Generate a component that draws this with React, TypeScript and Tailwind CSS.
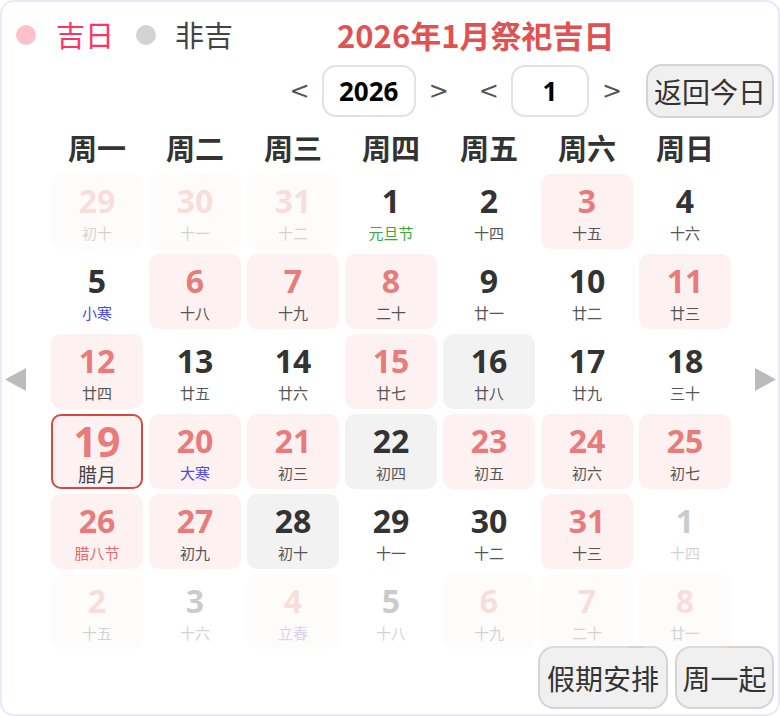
import React from "react";

type Kind = "lucky" | "plain" | "gray" | "today";

interface Cell {
  day: number;
  lunar: string;
  kind: Kind;
  out?: boolean;
  tone?: "green" | "blue" | "red" | "purple";
}

const WEEK = ["周一", "周二", "周三", "周四", "周五", "周六", "周日"];

const CELLS: Cell[] = [
  { day: 29, lunar: "初十", kind: "lucky", out: true },
  { day: 30, lunar: "十一", kind: "lucky", out: true },
  { day: 31, lunar: "十二", kind: "lucky", out: true },
  { day: 1, lunar: "元旦节", kind: "plain", tone: "green" },
  { day: 2, lunar: "十四", kind: "plain" },
  { day: 3, lunar: "十五", kind: "lucky" },
  { day: 4, lunar: "十六", kind: "plain" },

  { day: 5, lunar: "小寒", kind: "plain", tone: "blue" },
  { day: 6, lunar: "十八", kind: "lucky" },
  { day: 7, lunar: "十九", kind: "lucky" },
  { day: 8, lunar: "二十", kind: "lucky" },
  { day: 9, lunar: "廿一", kind: "plain" },
  { day: 10, lunar: "廿二", kind: "plain" },
  { day: 11, lunar: "廿三", kind: "lucky" },

  { day: 12, lunar: "廿四", kind: "lucky" },
  { day: 13, lunar: "廿五", kind: "plain" },
  { day: 14, lunar: "廿六", kind: "plain" },
  { day: 15, lunar: "廿七", kind: "lucky" },
  { day: 16, lunar: "廿八", kind: "gray" },
  { day: 17, lunar: "廿九", kind: "plain" },
  { day: 18, lunar: "三十", kind: "plain" },

  { day: 19, lunar: "腊月", kind: "today" },
  { day: 20, lunar: "大寒", kind: "lucky", tone: "blue" },
  { day: 21, lunar: "初三", kind: "lucky" },
  { day: 22, lunar: "初四", kind: "gray" },
  { day: 23, lunar: "初五", kind: "lucky" },
  { day: 24, lunar: "初六", kind: "lucky" },
  { day: 25, lunar: "初七", kind: "lucky" },

  { day: 26, lunar: "腊八节", kind: "lucky", tone: "red" },
  { day: 27, lunar: "初九", kind: "lucky" },
  { day: 28, lunar: "初十", kind: "gray" },
  { day: 29, lunar: "十一", kind: "plain" },
  { day: 30, lunar: "十二", kind: "plain" },
  { day: 31, lunar: "十三", kind: "lucky" },
  { day: 1, lunar: "十四", kind: "plain", out: true },

  { day: 2, lunar: "十五", kind: "lucky", out: true },
  { day: 3, lunar: "十六", kind: "plain", out: true },
  { day: 4, lunar: "立春", kind: "lucky", out: true, tone: "purple" },
  { day: 5, lunar: "十八", kind: "plain", out: true },
  { day: 6, lunar: "十九", kind: "lucky", out: true },
  { day: 7, lunar: "二十", kind: "lucky", out: true },
  { day: 8, lunar: "廿一", kind: "lucky", out: true },
];

const TONE: Record<string, string> = {
  green: "text-[#3aab3a]",
  blue: "text-[#4a4ae6]",
  red: "text-[#e86a6a]",
  purple: "text-[#6a4ae6]",
};

const FONT = { fontFamily: '"Open Sans", "Noto Sans CJK SC", sans-serif' };
const CJK = { fontFamily: '"Noto Sans CJK SC", sans-serif' };

const DayCell = ({ c }: { c: Cell }) => {
  const bg =
    c.kind === "gray"
      ? "bg-[#f2f2f2]"
      : c.kind === "lucky" || c.kind === "today"
        ? "bg-[#fdf2f1]"
        : "";
  const num = c.kind === "lucky" || c.kind === "today" ? "text-[#e97b7b]" : "text-[#333]";
  const lunarColor = c.tone ? TONE[c.tone] : c.kind === "today" ? "text-[#444]" : "text-[#555]";

  return (
    <div
      className={`flex h-[75px] flex-col items-center rounded-[10px] ${bg} ${
        c.kind === "today" ? "border-2 border-[#d8483f]" : ""
      } ${c.out ? "opacity-25" : ""}`}
    >
      {c.kind === "today" ? (
        <>
          <span className={`mt-[3px] text-[41px] font-bold leading-[44px] ${num}`} style={FONT}>
            {c.day}
          </span>
          <span className={`text-[19px] leading-[22px] ${lunarColor}`} style={CJK}>
            {c.lunar}
          </span>
        </>
      ) : (
        <>
          <span className={`mt-[6px] text-[32px] font-bold leading-[42px] ${num}`} style={FONT}>
            {c.day}
          </span>
          <span className={`mt-[1px] text-[15px] leading-[20px] ${lunarColor}`} style={CJK}>
            {c.lunar}
          </span>
        </>
      )}
    </div>
  );
};

const NumBox = ({ value, width }: { value: string; width: string }) => (
  <div
    className={`flex h-[52px] ${width} items-center justify-center rounded-[14px] border-2 border-[#e2e2e2] bg-white text-[26px] font-bold text-black`}
    style={FONT}
  >
    {value}
  </div>
);

const Chevron = ({ dir }: { dir: "<" | ">" }) => (
  <span className="text-[24px] text-[#555]" style={{ fontFamily: '"DejaVu Sans", sans-serif' }}>
    {dir}
  </span>
);

const SideArrow = ({ left }: { left?: boolean }) => (
  <svg width="21" height="23" viewBox="0 0 21 23" className="block">
    <polygon points={left ? "21,0 21,23 0,11.5" : "0,0 0,23 21,11.5"} fill="#bbbbbb" />
  </svg>
);

export default function App() {
  return (
    <div
      className="relative h-[716px] w-[780px] overflow-hidden rounded-[14px] border-2 border-[#e8ebf5] bg-white"
      style={CJK}
    >
      {/* legend + title */}
      <div className="flex h-[52px] items-center pl-[14px] pt-[14px]">
        <span className="h-[20px] w-[20px] rounded-full bg-[#ffc0cb]" />
        <span className="ml-[20px] text-[29px] text-[#ff3366]">吉日</span>
        <span className="ml-[22px] h-[20px] w-[20px] rounded-full bg-[#d3d3d3]" />
        <span className="ml-[19px] text-[29px] text-[#444]">非吉</span>
        <span className="ml-[104px] text-[31px] font-bold text-[#e05252]">2026年1月祭祀吉日</span>
      </div>

      {/* year / month nav */}
      <div className="mt-[10px] flex items-center justify-end pr-[4px]">
        <Chevron dir="<" />
        <div className="ml-[12px]">
          <NumBox value="2026" width="w-[94px]" />
        </div>
        <span className="ml-[13px]">
          <Chevron dir=">" />
        </span>
        <span className="ml-[30px]">
          <Chevron dir="<" />
        </span>
        <div className="ml-[12px]">
          <NumBox value="1" width="w-[78px]" />
        </div>
        <span className="ml-[13px]">
          <Chevron dir=">" />
        </span>
        <button
          type="button"
          className="ml-[24px] h-[54px] w-[128px] rounded-[16px] border-2 border-[#d4d4d4] bg-[#f0f0f0] text-[28px] text-[#333]"
        >
          返回今日
        </button>
      </div>

      {/* weekday header + grid */}
      <div className="mt-[8px] flex">
        <div className="ml-[3px] mt-[242px] w-[21px]">
          <SideArrow left />
        </div>
        <div className="ml-[25px] w-[680px]">
          <div className="grid h-[36px] grid-cols-7 gap-x-[6px]">
            {WEEK.map((w) => (
              <div key={w} className="flex items-center justify-center text-[29px] font-bold text-[#333]">
                {w}
              </div>
            ))}
          </div>
          <div className="mt-[12px] grid grid-cols-7 gap-x-[6px] gap-y-[5px]">
            {CELLS.map((c, i) => (
              <DayCell key={i} c={c} />
            ))}
          </div>
        </div>
        <div className="ml-[24px] mt-[242px] w-[21px]">
          <SideArrow />
        </div>
      </div>

      {/* footer buttons */}
      <div className="mt-[-3px] flex justify-end gap-[7px] pr-[4px]">
        <button
          type="button"
          className="h-[63px] w-[130px] rounded-[16px] border-2 border-[#d4d4d4] bg-[#f0f0f0] text-[28px] text-[#333]"
        >
          假期安排
        </button>
        <button
          type="button"
          className="h-[63px] w-[99px] rounded-[16px] border-2 border-[#d4d4d4] bg-[#f0f0f0] text-[28px] text-[#333]"
        >
          周一起
        </button>
      </div>
    </div>
  );
}
